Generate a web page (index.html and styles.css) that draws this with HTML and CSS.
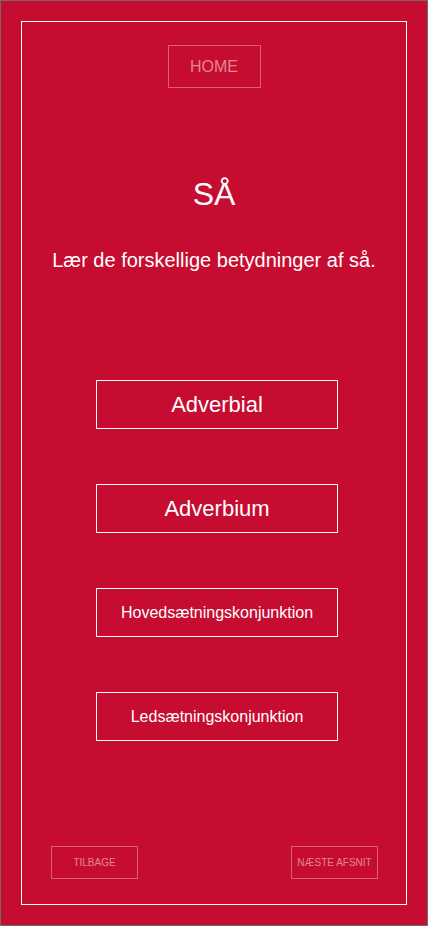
FILE: index.html
```html
<!DOCTYPE html>
<html lang="da">
<head>
<meta charset="utf-8">
<title>SÅ</title>
<link rel="stylesheet" href="styles.css">
</head>
<body>
<div class="page">
  <div class="frame">
    <div class="home">HOME</div>
    <h1 class="title">SÅ</h1>
    <p class="subtitle">Lær de forskellige betydninger af så.</p>
    <div class="choices">
      <div class="choice big">Adverbial</div>
      <div class="choice big">Adverbium</div>
      <div class="choice">Hovedsætningskonjunktion</div>
      <div class="choice">Ledsætningskonjunktion</div>
    </div>
    <div class="nav">
      <div class="navbtn">TILBAGE</div>
      <div class="navbtn">NÆSTE AFSNIT</div>
    </div>
  </div>
</div>
</body>
</html>
```
FILE: styles.css
```css
html, body {
  margin: 0;
  padding: 0;
}
body {
  font-family: "Liberation Sans", Arial, sans-serif;
  color: #fff;
}
.page {
  width: 428px;
  height: 926px;
  box-sizing: border-box;
  border: 1px solid #6b6b6b;
  background: #c60c30;
  padding: 20px;
}
.frame {
  height: 100%;
  box-sizing: border-box;
  border: 1px solid #fff;
  display: flex;
  flex-direction: column;
  align-items: center;
}
.home {
  margin-top: 23px;
  width: 93px;
  height: 43px;
  box-sizing: border-box;
  border: 1px solid rgba(255, 255, 255, 0.35);
  display: flex;
  align-items: center;
  justify-content: center;
  font-size: 16px;
  color: rgba(255, 255, 255, 0.5);
}
.title {
  margin: 86px 0 0;
  font-size: 32px;
  line-height: 40px;
  font-weight: normal;
}
.subtitle {
  margin: 34px 0 0;
  font-size: 20px;
  line-height: 24px;
}
.choices {
  align-self: flex-start;
  margin: 108px 0 0 74px;
  display: flex;
  flex-direction: column;
  gap: 55px;
}
.choice {
  width: 242px;
  height: 49px;
  box-sizing: border-box;
  border: 1px solid #fff;
  display: flex;
  align-items: center;
  justify-content: center;
  font-size: 16px;
  padding-top: 1px;
}
.choice.big {
  font-size: 22px;
}
.nav {
  margin-top: auto;
  margin-bottom: 25px;
  align-self: stretch;
  padding: 0 28px 0 29px;
  display: flex;
  justify-content: space-between;
}
.navbtn {
  width: 87px;
  height: 33px;
  box-sizing: border-box;
  border: 1px solid rgba(255, 255, 255, 0.35);
  display: flex;
  align-items: center;
  justify-content: center;
  font-size: 10px;
  color: rgba(255, 255, 255, 0.5);
}
```
